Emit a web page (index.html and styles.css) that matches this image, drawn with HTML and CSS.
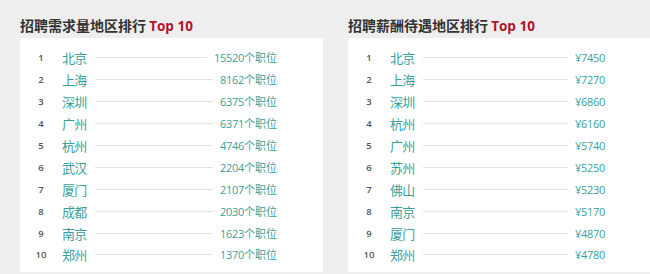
FILE: index.html
```html
<!DOCTYPE html>
<html lang="zh-CN">
<head>
<meta charset="utf-8">
<link rel="stylesheet" href="styles.css">
</head>
<body>
<div class="page">
  <section class="panel">
    <h2 class="title">招聘需求量地区排行 <span class="top">Top 10</span></h2>
    <ol class="card">
      <li class="row"><span class="num">1</span><span class="city">北京</span><span class="line"></span><span class="val"><span class="d">15520</span>个职位</span></li>
      <li class="row"><span class="num">2</span><span class="city">上海</span><span class="line"></span><span class="val"><span class="d">8162</span>个职位</span></li>
      <li class="row"><span class="num">3</span><span class="city">深圳</span><span class="line"></span><span class="val"><span class="d">6375</span>个职位</span></li>
      <li class="row"><span class="num">4</span><span class="city">广州</span><span class="line"></span><span class="val"><span class="d">6371</span>个职位</span></li>
      <li class="row"><span class="num">5</span><span class="city">杭州</span><span class="line"></span><span class="val"><span class="d">4746</span>个职位</span></li>
      <li class="row"><span class="num">6</span><span class="city">武汉</span><span class="line"></span><span class="val"><span class="d">2204</span>个职位</span></li>
      <li class="row"><span class="num">7</span><span class="city">厦门</span><span class="line"></span><span class="val"><span class="d">2107</span>个职位</span></li>
      <li class="row"><span class="num">8</span><span class="city">成都</span><span class="line"></span><span class="val"><span class="d">2030</span>个职位</span></li>
      <li class="row"><span class="num">9</span><span class="city">南京</span><span class="line"></span><span class="val"><span class="d">1623</span>个职位</span></li>
      <li class="row"><span class="num">10</span><span class="city">郑州</span><span class="line"></span><span class="val"><span class="d">1370</span>个职位</span></li>
    </ol>
  </section>
  <section class="panel">
    <h2 class="title">招聘薪酬待遇地区排行 <span class="top">Top 10</span></h2>
    <ol class="card">
      <li class="row"><span class="num">1</span><span class="city">北京</span><span class="line"></span><span class="val"><span class="d">¥7450</span></span></li>
      <li class="row"><span class="num">2</span><span class="city">上海</span><span class="line"></span><span class="val"><span class="d">¥7270</span></span></li>
      <li class="row"><span class="num">3</span><span class="city">深圳</span><span class="line"></span><span class="val"><span class="d">¥6860</span></span></li>
      <li class="row"><span class="num">4</span><span class="city">杭州</span><span class="line"></span><span class="val"><span class="d">¥6160</span></span></li>
      <li class="row"><span class="num">5</span><span class="city">广州</span><span class="line"></span><span class="val"><span class="d">¥5740</span></span></li>
      <li class="row"><span class="num">6</span><span class="city">苏州</span><span class="line"></span><span class="val"><span class="d">¥5250</span></span></li>
      <li class="row"><span class="num">7</span><span class="city">佛山</span><span class="line"></span><span class="val"><span class="d">¥5230</span></span></li>
      <li class="row"><span class="num">8</span><span class="city">南京</span><span class="line"></span><span class="val"><span class="d">¥5170</span></span></li>
      <li class="row"><span class="num">9</span><span class="city">厦门</span><span class="line"></span><span class="val"><span class="d">¥4870</span></span></li>
      <li class="row"><span class="num">10</span><span class="city">郑州</span><span class="line"></span><span class="val"><span class="d">¥4780</span></span></li>
    </ol>
  </section>
</div>
</body>
</html>
```

FILE: styles.css
```css
html, body {
  margin: 0;
  padding: 0;
  background: #eeeeee;
  font-family: "Noto Sans CJK SC", "Open Sans", sans-serif;
}

.page {
  display: flex;
  gap: 25px;
  padding: 0 0 0 20px;
  width: 650px;
  box-sizing: border-box;
}

.panel {
  width: 303px;
  flex: none;
}

.title {
  margin: 0;
  height: 38px;
  box-sizing: border-box;
  padding-top: 15px;
  font-size: 14px;
  line-height: 20px;
  font-weight: bold;
  color: #333333;
  white-space: nowrap;
}

.top {
  color: #b3122c;
  font-family: "Open Sans", sans-serif;
  font-weight: 700;
  font-size: 13.5px;
}

.card {
  list-style: none;
  margin: 0;
  background: #ffffff;
  padding: 9px 46px 6px 12px;
  height: 234px;
  box-sizing: border-box;
}

.row {
  display: flex;
  align-items: center;
  height: 21.9px;
}

.num {
  width: 18px;
  flex: none;
  text-align: center;
  font-family: "Open Sans", sans-serif;
  font-size: 9.5px;
  font-weight: 600;
  color: #555555;
}

.city {
  margin-left: 12px;
  flex: none;
  font-size: 13px;
  color: #3a9f9a;
  line-height: 1;
  letter-spacing: -0.8px;
}

.line {
  flex: 1;
  height: 1px;
  background: #e2e2e2;
  margin: 0 7px 0 9px;
}

.val {
  flex: none;
  font-size: 11px;
  color: #3a9f9a;
  line-height: 1;
}

.d {
  font-family: "Open Sans", sans-serif;
  font-size: 11px;
  letter-spacing: -0.3px;
}
```
